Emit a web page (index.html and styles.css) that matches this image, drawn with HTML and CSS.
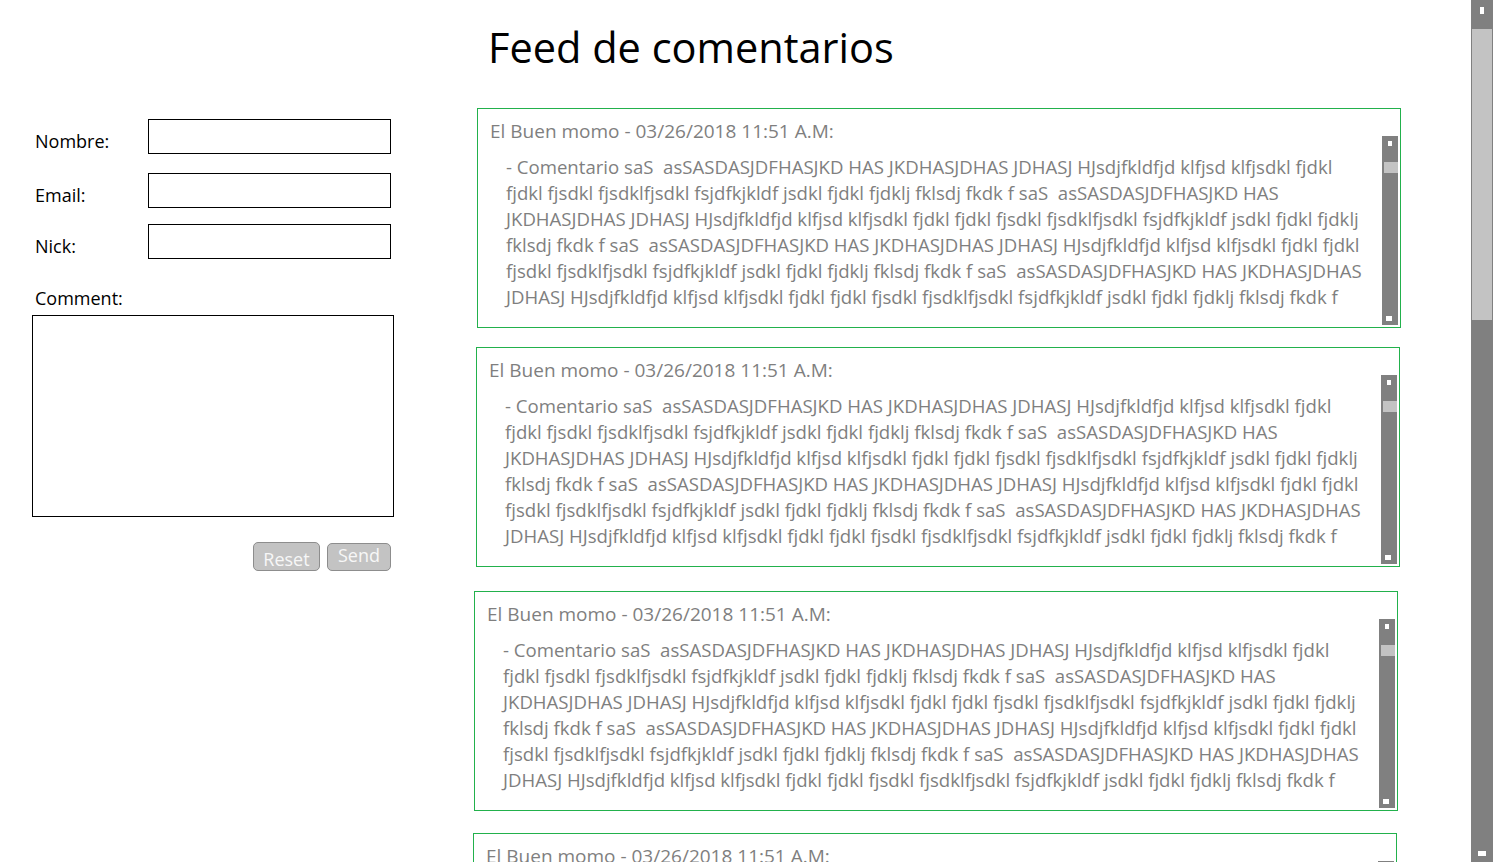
FILE: index.html
```html
<!DOCTYPE html>
<html lang="es">
<head>
<meta charset="utf-8">
<title>Feed de comentarios</title>
<link rel="stylesheet" href="styles.css">
</head>
<body>
<div class="page">
  <main class="main">
    <form class="form">
      <div class="row">
        <label class="label" for="nombre">Nombre:</label>
        <input class="input" id="nombre" type="text">
      </div>
      <div class="row">
        <label class="label" for="email">Email:</label>
        <input class="input" id="email" type="text">
      </div>
      <div class="row">
        <label class="label" for="nick">Nick:</label>
        <input class="input" id="nick" type="text">
      </div>
      <label class="label comment-label" for="comment">Comment:</label>
      <textarea class="textarea" id="comment"></textarea>
      <div class="buttons">
        <button class="btn btn-reset" type="reset">Reset</button>
        <button class="btn btn-send" type="button">Send</button>
      </div>
    </form>

    <section class="feed">
      <h1 class="title">Feed de comentarios</h1>

      <article class="card">
        <div class="card-body">
          <div class="card-head">El Buen momo - 03/26/2018 11:51 A.M:</div>
          <p class="card-text">- Comentario saS&nbsp; asSASDASJDFHASJKD HAS JKDHASJDHAS JDHASJ HJsdjfkldfjd klfjsd klfjsdkl fjdkl fjdkl fjsdkl fjsdklfjsdkl fsjdfkjkldf jsdkl fjdkl fjdklj fklsdj fkdk f saS&nbsp; asSASDASJDFHASJKD HAS JKDHASJDHAS JDHASJ HJsdjfkldfjd klfjsd klfjsdkl fjdkl fjdkl fjsdkl fjsdklfjsdkl fsjdfkjkldf jsdkl fjdkl fjdklj fklsdj fkdk f saS&nbsp; asSASDASJDFHASJKD HAS JKDHASJDHAS JDHASJ HJsdjfkldfjd klfjsd klfjsdkl fjdkl fjdkl fjsdkl fjsdklfjsdkl fsjdfkjkldf jsdkl fjdkl fjdklj fklsdj fkdk f saS&nbsp; asSASDASJDFHASJKD HAS JKDHASJDHAS JDHASJ HJsdjfkldfjd klfjsd klfjsdkl fjdkl fjdkl fjsdkl fjsdklfjsdkl fsjdfkjkldf jsdkl fjdkl fjdklj fklsdj fkdk f</p>
        </div>
        <div class="sb"><span class="sb-up"></span><span class="sb-thumb"></span><span class="sb-down"></span></div>
      </article>

      <article class="card">
        <div class="card-body">
          <div class="card-head">El Buen momo - 03/26/2018 11:51 A.M:</div>
          <p class="card-text">- Comentario saS&nbsp; asSASDASJDFHASJKD HAS JKDHASJDHAS JDHASJ HJsdjfkldfjd klfjsd klfjsdkl fjdkl fjdkl fjsdkl fjsdklfjsdkl fsjdfkjkldf jsdkl fjdkl fjdklj fklsdj fkdk f saS&nbsp; asSASDASJDFHASJKD HAS JKDHASJDHAS JDHASJ HJsdjfkldfjd klfjsd klfjsdkl fjdkl fjdkl fjsdkl fjsdklfjsdkl fsjdfkjkldf jsdkl fjdkl fjdklj fklsdj fkdk f saS&nbsp; asSASDASJDFHASJKD HAS JKDHASJDHAS JDHASJ HJsdjfkldfjd klfjsd klfjsdkl fjdkl fjdkl fjsdkl fjsdklfjsdkl fsjdfkjkldf jsdkl fjdkl fjdklj fklsdj fkdk f saS&nbsp; asSASDASJDFHASJKD HAS JKDHASJDHAS JDHASJ HJsdjfkldfjd klfjsd klfjsdkl fjdkl fjdkl fjsdkl fjsdklfjsdkl fsjdfkjkldf jsdkl fjdkl fjdklj fklsdj fkdk f</p>
        </div>
        <div class="sb"><span class="sb-up"></span><span class="sb-thumb"></span><span class="sb-down"></span></div>
      </article>

      <article class="card">
        <div class="card-body">
          <div class="card-head">El Buen momo - 03/26/2018 11:51 A.M:</div>
          <p class="card-text">- Comentario saS&nbsp; asSASDASJDFHASJKD HAS JKDHASJDHAS JDHASJ HJsdjfkldfjd klfjsd klfjsdkl fjdkl fjdkl fjsdkl fjsdklfjsdkl fsjdfkjkldf jsdkl fjdkl fjdklj fklsdj fkdk f saS&nbsp; asSASDASJDFHASJKD HAS JKDHASJDHAS JDHASJ HJsdjfkldfjd klfjsd klfjsdkl fjdkl fjdkl fjsdkl fjsdklfjsdkl fsjdfkjkldf jsdkl fjdkl fjdklj fklsdj fkdk f saS&nbsp; asSASDASJDFHASJKD HAS JKDHASJDHAS JDHASJ HJsdjfkldfjd klfjsd klfjsdkl fjdkl fjdkl fjsdkl fjsdklfjsdkl fsjdfkjkldf jsdkl fjdkl fjdklj fklsdj fkdk f saS&nbsp; asSASDASJDFHASJKD HAS JKDHASJDHAS JDHASJ HJsdjfkldfjd klfjsd klfjsdkl fjdkl fjdkl fjsdkl fjsdklfjsdkl fsjdfkjkldf jsdkl fjdkl fjdklj fklsdj fkdk f</p>
        </div>
        <div class="sb"><span class="sb-up"></span><span class="sb-thumb"></span><span class="sb-down"></span></div>
      </article>

      <article class="card">
        <div class="card-body">
          <div class="card-head">El Buen momo - 03/26/2018 11:51 A.M:</div>
          <p class="card-text">- Comentario saS&nbsp; asSASDASJDFHASJKD HAS JKDHASJDHAS JDHASJ HJsdjfkldfjd klfjsd klfjsdkl fjdkl fjdkl fjsdkl fjsdklfjsdkl fsjdfkjkldf jsdkl fjdkl fjdklj fklsdj fkdk f</p>
        </div>
        <div class="sb"><span class="sb-up"></span><span class="sb-thumb"></span><span class="sb-down"></span></div>
      </article>
    </section>
  </main>

  <div class="vscroll">
    <span class="vs-up"></span>
    <span class="vs-thumb"></span>
    <span class="vs-down"></span>
  </div>
</div>
</body>
</html>
```

FILE: styles.css
```css
html, body {
  margin: 0;
  padding: 0;
  height: 100%;
  overflow: hidden;
  background: #ffffff;
}

body {
  font-family: "Open Sans", "Noto Sans", sans-serif;
  color: #000;
}

.page {
  display: flex;
  height: 862px;
  overflow: hidden;
}

.main {
  flex: 1;
  display: flex;
  align-items: flex-start;
  min-width: 0;
}

/* ---------- form ---------- */
.form {
  width: 441px;
  flex: none;
  padding: 119px 0 0 32px;
  display: flex;
  flex-direction: column;
}

.row {
  display: flex;
  align-items: flex-start;
}

.row:nth-child(1) { margin-bottom: 19px; }
.row:nth-child(2) { margin-bottom: 16px; }

.label {
  display: block;
  width: 116px;
  flex: none;
  padding: 9px 0 0 3px;
  box-sizing: border-box;
  font-size: 18px;
  line-height: 26px;
  color: #000;
}

.input {
  width: 243px;
  height: 35px;
  box-sizing: border-box;
  border: 1px solid #000;
  margin: 0;
  padding: 0 6px;
  background: #fff;
  font: inherit;
  outline: none;
}

.comment-label {
  padding: 0 0 0 3px;
  margin-top: 26px;
  width: auto;
}

.textarea {
  display: block;
  width: 362px;
  height: 202px;
  box-sizing: border-box;
  margin: 4px 0 0 0;
  border: 1px solid #000;
  resize: none;
  font: inherit;
  outline: none;
}

.buttons {
  display: flex;
  justify-content: flex-end;
  gap: 7px;
  width: 359px;
  margin-top: 25px;
}

.btn {
  background: #c3c3c3;
  border: 1px solid #8d8d8d;
  border-radius: 5px;
  color: #f7f7f7;
  font-family: "Open Sans", "Noto Sans", sans-serif;
  font-size: 18px;
  line-height: 22px;
  margin: 0;
  cursor: pointer;
}

.btn-reset {
  width: 67px;
  height: 29px;
  padding: 4px 0 0 0;
}

.btn-send {
  width: 64px;
  height: 28px;
  padding: 0 0 4px 0;
  margin-top: 1px;
}

/* ---------- feed ---------- */
.feed {
  width: 928px;
  flex: none;
  display: flex;
  flex-direction: column;
}

.title {
  margin: 22px 0 0 0;
  padding-left: 15px;
  font-size: 41.5px;
  line-height: 50px;
  font-weight: 400;
  color: #000;
}

.card {
  width: 924px;
  height: 220px;
  box-sizing: border-box;
  border: 1px solid #22b14c;
  display: flex;
  flex: none;
  overflow: hidden;
}

.card:nth-of-type(1) { margin: 36px 0 0 4px; }
.card:nth-of-type(2) { margin: 19px 0 0 3px; }
.card:nth-of-type(3) { margin: 24px 0 0 1px; }
.card:nth-of-type(4) { margin: 22px 0 0 0; }

.card-body {
  flex: 1;
  min-width: 0;
  overflow: hidden;
  padding: 9px 10px 0 12px;
  color: #7f7f7f;
  font-size: 19px;
  line-height: 26px;
}

.card-head {
  margin: 0;
}

.card-text {
  margin: 10px 0 0 16px;
  font-size: 18.6px;
}

/* inner drawn scrollbar */
.sb {
  width: 16px;
  flex: none;
  margin: 27px 2px 2px 0;
  background: #808080;
  display: flex;
  flex-direction: column;
  align-items: center;
  padding: 5px 0 4px;
  box-sizing: border-box;
}

.sb-up {
  width: 4px;
  height: 5px;
  background: #fff;
}

.sb-thumb {
  align-self: flex-end;
  width: 14px;
  height: 11px;
  margin-top: 16px;
  background: #c3c3c3;
}

.sb-down {
  width: 6px;
  height: 5px;
  margin-top: auto;
  margin-right: 2px;
  background: #fff;
}

/* ---------- page scrollbar ---------- */
.vscroll {
  width: 22px;
  flex: none;
  height: 862px;
  background: #808080;
  display: flex;
  flex-direction: column;
  align-items: center;
}

.vs-up {
  width: 4px;
  height: 7px;
  margin-top: 7px;
  background: #fff;
}

.vs-thumb {
  align-self: stretch;
  height: 291px;
  margin: 15px 1px 0 1px;
  background: #c3c3c3;
}

.vs-down {
  width: 8px;
  height: 5px;
  margin-top: auto;
  margin-bottom: 6px;
  background: #fff;
}
```
